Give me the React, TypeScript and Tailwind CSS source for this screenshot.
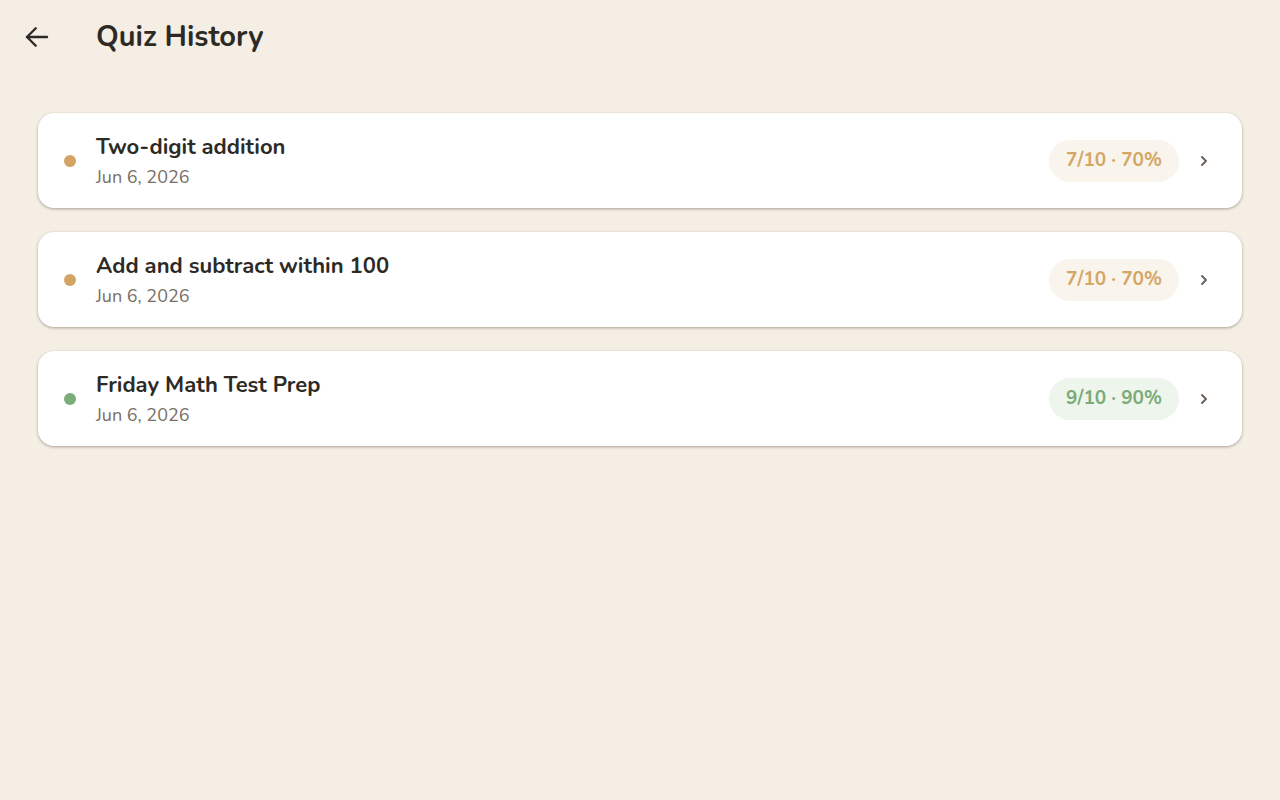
import React from 'react';

type Attempt = {
  title: string;
  date: string;
  score: number;
  total: number;
};

const attempts: Attempt[] = [
  { title: 'Two-digit addition', date: 'Jun 6, 2026', score: 7, total: 10 },
  { title: 'Add and subtract within 100', date: 'Jun 6, 2026', score: 7, total: 10 },
  { title: 'Friday Math Test Prep', date: 'Jun 6, 2026', score: 9, total: 10 },
];

function BackArrow() {
  return (
    <svg width="30" height="30" viewBox="0 0 24 24" fill="none" stroke="#2d2a26" strokeWidth="1.9" strokeLinecap="round" strokeLinejoin="round">
      <path d="M20 12H4" />
      <path d="M11 5l-7 7 7 7" />
    </svg>
  );
}

function Chevron() {
  return (
    <svg width="16" height="16" viewBox="0 0 24 24" fill="none" stroke="#6e625a" strokeWidth="3" strokeLinecap="round" strokeLinejoin="round">
      <path d="M9 6l6 6-6 6" />
    </svg>
  );
}

function HistoryCard({ attempt }: { attempt: Attempt }) {
  const pct = Math.round((attempt.score / attempt.total) * 100);
  const good = pct >= 80;

  return (
    <div className="flex h-[95px] items-center rounded-2xl bg-white pl-[26px] pr-[30px] shadow-[0_1px_3px_rgba(60,45,30,0.4)]">
      <div className={`h-3 w-3 rounded-full ${good ? 'bg-[#7aad78]' : 'bg-[#d4a464]'}`} />
      <div className="ml-[20px] flex flex-1 flex-col">
        <div className="text-[22px] font-bold leading-7 text-[#2d2a26]">{attempt.title}</div>
        <div className="mt-[4px] text-[18px] leading-6 text-[#7a6e64]">{attempt.date}</div>
      </div>
      <div
        className={`flex h-[42px] w-[130px] items-center justify-center rounded-full text-[19px] font-bold ${
          good ? 'bg-[#eef5ec] text-[#7aab77]' : 'bg-[#f9f4ec] text-[#d4a665]'
        }`}
      >
        {attempt.score}/{attempt.total} · {pct}%
      </div>
      <div className="ml-[17px]">
        <Chevron />
      </div>
    </div>
  );
}

export default function App() {
  return (
    <div className="min-h-screen bg-[#f5eee5]" style={{ fontFamily: '"Nunito", Lato, "Noto Sans", sans-serif' }}>
      {/* Header */}
      <div className="flex h-[74px] items-center pl-[22px]">
        <button className="flex h-[30px] w-[30px] items-center justify-center">
          <BackArrow />
        </button>
        <h1 className="ml-[44px] text-[29px] font-bold text-[#2d2a26]">Quiz History</h1>
      </div>

      {/* List */}
      <div className="mt-[39px] flex flex-col gap-[24px] px-[38px]">
        {attempts.map((a) => (
          <HistoryCard key={a.title} attempt={a} />
        ))}
      </div>
    </div>
  );
}
